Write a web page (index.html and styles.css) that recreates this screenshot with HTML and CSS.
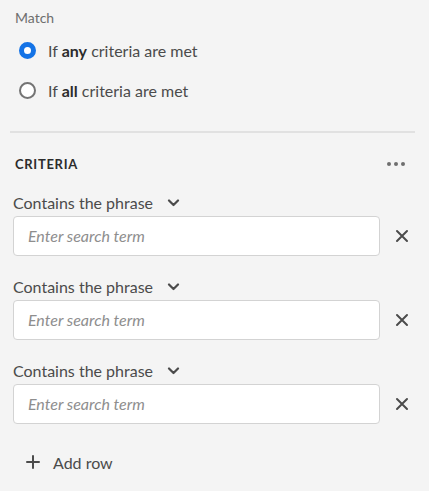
FILE: index.html
```html
<!DOCTYPE html>
<html>
<head>
<meta charset="utf-8">
<link rel="stylesheet" href="styles.css">
</head>
<body>
<div class="panel">
  <div class="match">
    <div class="match-label">Match</div>
    <label class="radio">
      <span class="radio-dot checked"></span>
      <span class="radio-text">If <b>any</b> criteria are met</span>
    </label>
    <label class="radio">
      <span class="radio-dot"></span>
      <span class="radio-text">If <b>all</b> criteria are met</span>
    </label>
  </div>
  <div class="divider"></div>
  <div class="criteria-head">
    <span class="criteria-title">CRITERIA</span>
    <span class="more"><i></i><i></i><i></i></span>
  </div>
  <div class="rows">
    <div class="row">
      <div class="picker">Contains the phrase
        <svg class="chev" width="13" height="8" viewBox="0 0 13 8"><path d="M2 1.5l4.5 4.5 4.5-4.5" fill="none" stroke="#4b4b4b" stroke-width="2.2" stroke-linecap="round" stroke-linejoin="round"/></svg>
      </div>
      <div class="field-line">
        <div class="field">Enter search term</div>
        <svg class="close" width="14" height="14" viewBox="0 0 14 14"><path d="M2 2l10 10M12 2L2 12" stroke="#4b4b4b" stroke-width="2" stroke-linecap="round"/></svg>
      </div>
    </div>
    <div class="row">
      <div class="picker">Contains the phrase
        <svg class="chev" width="13" height="8" viewBox="0 0 13 8"><path d="M2 1.5l4.5 4.5 4.5-4.5" fill="none" stroke="#4b4b4b" stroke-width="2.2" stroke-linecap="round" stroke-linejoin="round"/></svg>
      </div>
      <div class="field-line">
        <div class="field">Enter search term</div>
        <svg class="close" width="14" height="14" viewBox="0 0 14 14"><path d="M2 2l10 10M12 2L2 12" stroke="#4b4b4b" stroke-width="2" stroke-linecap="round"/></svg>
      </div>
    </div>
    <div class="row">
      <div class="picker">Contains the phrase
        <svg class="chev" width="13" height="8" viewBox="0 0 13 8"><path d="M2 1.5l4.5 4.5 4.5-4.5" fill="none" stroke="#4b4b4b" stroke-width="2.2" stroke-linecap="round" stroke-linejoin="round"/></svg>
      </div>
      <div class="field-line">
        <div class="field">Enter search term</div>
        <svg class="close" width="14" height="14" viewBox="0 0 14 14"><path d="M2 2l10 10M12 2L2 12" stroke="#4b4b4b" stroke-width="2" stroke-linecap="round"/></svg>
      </div>
    </div>
  </div>
  <div class="add-row">
    <svg width="14" height="14" viewBox="0 0 14 14"><path d="M7 1v12M1 7h12" stroke="#4b4b4b" stroke-width="2" stroke-linecap="round"/></svg>
    <span>Add row</span>
  </div>
</div>
</body>
</html>
```
FILE: styles.css
```css
html, body {
  margin: 0;
  padding: 0;
  background: #f4f4f4;
}
body {
  font-family: Lato, "Noto Sans", sans-serif;
  color: #4b4b4b;
  width: 429px;
  height: 491px;
  overflow: hidden;
}
.panel {
  padding: 9px 14px 0 10px;
}
.match {
  padding-left: 5px;
}
.match-label {
  font-size: 14px;
  color: #6e6e6e;
  height: 18px;
  line-height: 18px;
}
.radio {
  display: flex;
  align-items: center;
  height: 40px;
  gap: 12px;
  font-size: 16px;
  color: #4b4b4b;
}
.radio:first-of-type {
  margin-top: 3px;
}
.radio b {
  font-weight: 700;
  color: #2c2c2c;
}
.radio-dot {
  box-sizing: border-box;
  width: 17px;
  height: 17px;
  border-radius: 50%;
  border: 2px solid #747474;
  background: #fff;
  margin-left: 4px;
}
.radio-dot.checked {
  border: 5px solid #1473e6;
}
.divider {
  height: 2px;
  background: #e1e1e1;
  margin-top: 21px;
}
.criteria-head {
  display: flex;
  align-items: center;
  justify-content: space-between;
  margin-top: 20px;
  padding-left: 5px;
  height: 22px;
}
.criteria-title {
  font-size: 13px;
  font-weight: 700;
  letter-spacing: 0.7px;
  color: #2c2c2c;
}
.more {
  display: flex;
  gap: 3px;
  margin-right: 10px;
}
.more i {
  width: 4px;
  height: 4px;
  border-radius: 50%;
  background: #6e6e6e;
}
.rows {
  display: flex;
  flex-direction: column;
  gap: 18px;
  margin-top: 15px;
  padding-left: 3px;
}
.picker {
  display: flex;
  align-items: center;
  gap: 14px;
  font-size: 16px;
  height: 24px;
  color: #4b4b4b;
}
.chev {
  margin-top: 1px;
}
.field-line {
  display: flex;
  align-items: center;
  margin-top: 2px;
}
.field {
  box-sizing: border-box;
  width: 367px;
  height: 40px;
  background: #fff;
  border: 1px solid #d3d3d3;
  border-radius: 4px;
  padding: 0 0 2px 14px;
  font-size: 16px;
  font-style: italic;
  color: #8e8e8e;
  display: flex;
  align-items: center;
}
.close {
  margin-left: 15px;
}
.add-row {
  display: flex;
  align-items: center;
  gap: 13px;
  margin-top: 28px;
  padding-left: 16px;
  height: 20px;
  font-size: 16px;
  color: #4b4b4b;
}
```
